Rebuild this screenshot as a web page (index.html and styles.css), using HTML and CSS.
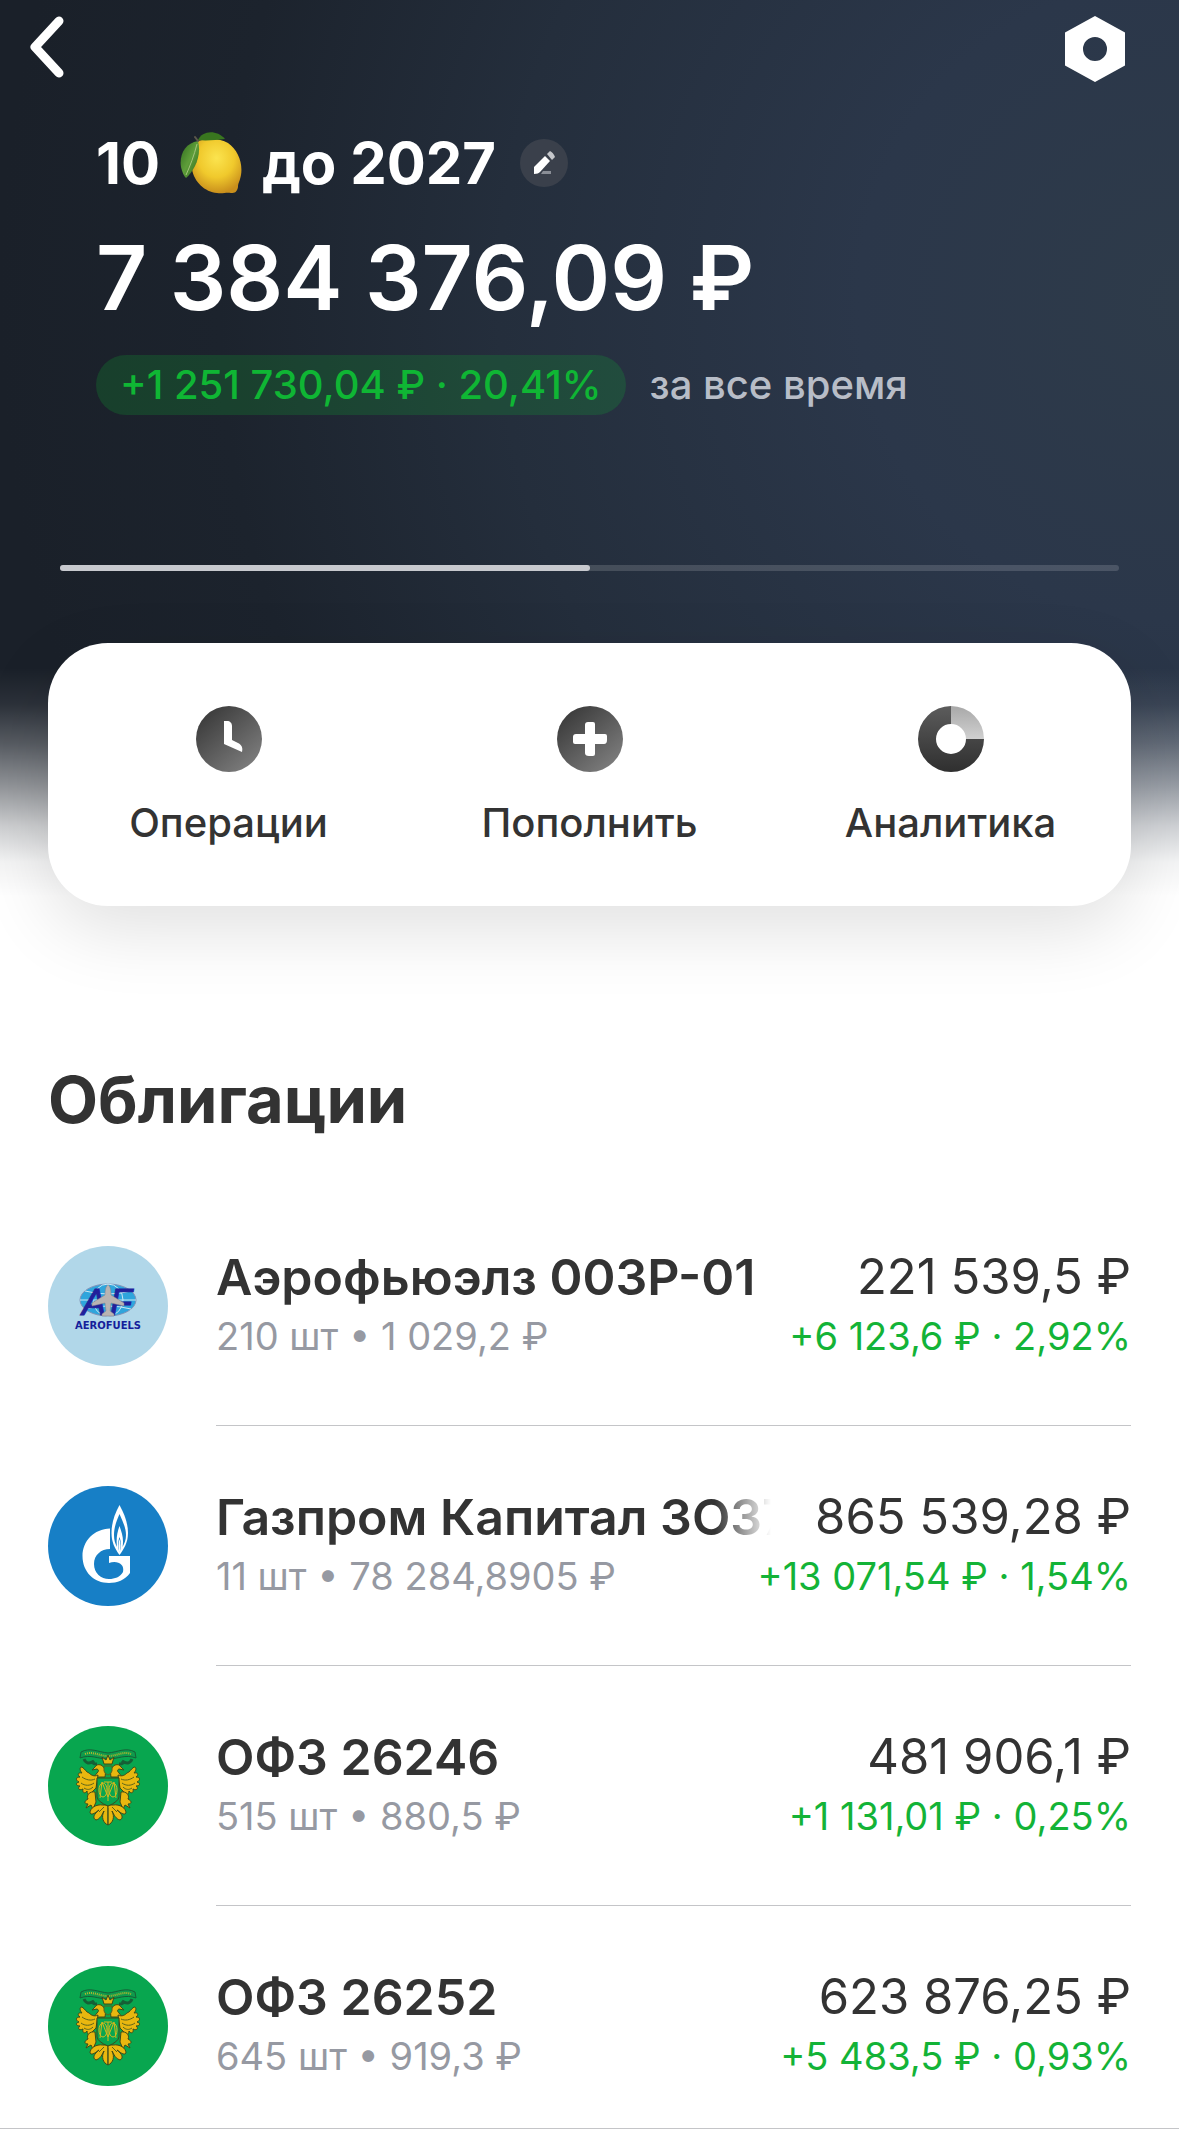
FILE: index.html
```html
<!DOCTYPE html>
<html lang="ru">
<head>
  <meta charset="UTF-8" />
  <title>Портфель</title>
  <meta name="viewport" content="width=device-width, initial-scale=1.0" />
  <link rel="stylesheet" href="styles.css">
</head>
<body>
  <header class="hero">
    <nav class="topbar">
      <button class="icon-btn" aria-label="Назад">
        <svg width="36" height="62" viewBox="0 0 36 62"><path d="M30 5 L6 31 L30 57" fill="none" stroke="#fff" stroke-width="9" stroke-linecap="round" stroke-linejoin="round"/></svg>
      </button>
      <button class="icon-btn" aria-label="Настройки">
        <svg width="60" height="66" viewBox="0 0 60 66"><path fill="#fff" fill-rule="evenodd" d="M30 0 L60 16.500 V49.500 L30 66 L0 49.500 V16.500 Z M30 21 a12 12 0 1 0 0 24 a12 12 0 1 0 0 -24 Z"/></svg>
      </button>
    </nav>

    <div class="summary">
      <div class="name-row">
        <h1 class="portfolio-name">
          <span>10</span>
          <svg class="lemon" viewBox="0 0 62 62" role="img" aria-label="лимон">
            <defs>
              <radialGradient id="lemonSkin" cx="0.5" cy="0.35" r="0.65">
                <stop offset="0" stop-color="#fbe44f"/>
                <stop offset="0.55" stop-color="#f0c92c"/>
                <stop offset="1" stop-color="#c98f1c"/>
              </radialGradient>
              <linearGradient id="leaf" x1="0" y1="0" x2="1" y2="1">
                <stop offset="0" stop-color="#2f6a1e"/>
                <stop offset="0.5" stop-color="#5f9e3a"/>
                <stop offset="1" stop-color="#2c661b"/>
              </linearGradient>
            </defs>
            <path fill="url(#lemonSkin)" d="M18 9 C27 6 40 6 48 11 C58 18 63 31 61 43 C60 49 58 51 58 55 C57 60 55 61 51 61 C46 60 43 62 37 61 C25 60 14 50 12 37 C11 26 12 14 18 9 Z"/>
            <path fill="url(#leaf)" d="M18 9 C5 11 -1 23 1 35 C2 40 4 44 6 46 C14 39 22 24 18 9 Z"/>
            <path fill="#39761f" d="M18 8 C22 -1 36 -3 45 7 C36 8 26 9 18 8 Z"/>
            <path fill="none" stroke="#a5c57d" stroke-width="1" d="M17 12 C14 24 10 34 6 43"/>
            <path fill="none" stroke="#5c574b" stroke-width="2" stroke-linecap="round" d="M18 9 L15 5"/>
          </svg>
          <span>до 2027</span>
        </h1>
        <button class="edit-btn" aria-label="Переименовать">
          <svg width="24" height="24" viewBox="0 0 24 24">
            <path fill="#fff" d="M2 23 V16 L13 5 L18 10 L8 21 C7 22 5 23 2 23 Z"/>
            <path fill="#c5c7cb" d="M15 3 L18 0 C20 1 22 3 23 6 L20 9 Z"/>
            <path fill="#8a8e96" d="M9 23 L11 20 H19 V23 Z"/>
          </svg>
        </button>
      </div>
      <div class="total">7 384 376,09 ₽</div>
      <div class="profit-row">
        <span class="profit">+1 251 730,04 ₽ · 20,41%</span>
        <span class="period">за все время</span>
      </div>
    </div>

    <div class="pager"><div class="pager-active"></div></div>

    <div class="actions">
      <button class="action">
        <svg width="66" height="66" viewBox="0 0 66 66">
          <defs>
            <linearGradient id="dark" x1="0.15" y1="0.1" x2="0.85" y2="0.9">
              <stop offset="0" stop-color="#3c3c3c"/>
              <stop offset="1" stop-color="#7c7c7c"/>
            </linearGradient>
          </defs>
          <circle cx="33" cy="33" r="33" fill="url(#dark)"/>
          <path fill="#fff" d="M28 15 H31 C34 15 36 17 36 20 V34 L42 37 C46 39 47 42 46 46 L28 38 Z"/>
        </svg>
        <span>Операции</span>
      </button>
      <button class="action">
        <svg width="66" height="66" viewBox="0 0 66 66">
          <circle cx="33" cy="33" r="33" fill="url(#dark)"/>
          <path fill="#fff" d="M31 16 H36 Q38 16 38 18 V28 H48 Q50 28 50 30 V34 Q50 38 47 38 H38 V48 Q38 50 36 50 H32 Q28 50 28 47 V38 H18 Q16 38 16 36 V31 Q16 28 19 28 H28 V19 Q28 16 31 16 Z"/>
        </svg>
        <span>Пополнить</span>
      </button>
      <button class="action">
        <svg width="66" height="66" viewBox="0 0 66 66">
          <defs>
            <linearGradient id="ring" x1="0" y1="0" x2="0" y2="1">
              <stop offset="0" stop-color="#5c5c5c"/>
              <stop offset="1" stop-color="#2f2f2f"/>
            </linearGradient>
            <linearGradient id="slice" x1="0" y1="0" x2="0" y2="1">
              <stop offset="0" stop-color="#a8a8a8"/>
              <stop offset="1" stop-color="#d0d0d0"/>
            </linearGradient>
          </defs>
          <path fill="url(#ring)" d="M33 0 A33 33 0 1 0 66 33 H48 A15 15 0 1 1 33 18 Z"/>
          <path fill="url(#slice)" d="M33 0 A33 33 0 0 1 66 33 H48 A15 15 0 0 0 33 18 Z"/>
        </svg>
        <span>Аналитика</span>
      </button>
    </div>
  </header>

  <main class="bonds">
    <h2>Облигации</h2>
    <ul class="list">
      <li class="row">
        <svg class="logo" viewBox="0 0 120 120">
          <circle cx="60" cy="60" r="60" fill="#b1d7e9"/>
          <ellipse cx="60" cy="54" rx="28" ry="16" fill="#2fa5dc" stroke="#8293b8" stroke-width="1"/>
          <g fill="none" stroke="#c9e8f5" stroke-width="1">
            <ellipse cx="60" cy="54" rx="15" ry="16"/>
            <path d="M32 54 H88 M60 38 V70 M37 45 Q60 51 83 45 M37 63 Q60 57 83 63"/>
          </g>
          <text class="af-mark" x="34" y="69">A</text>
          <text class="af-mark" x="62" y="69">F</text>
          <path fill="#b9b4b2" stroke="#837f8a" stroke-width="0.500" d="M60 39 C62 40 63 43 63 49 L76 57 V60 L63 57 L62 65 L66 68 V70 H54 V68 L58 65 L57 57 L44 60 V57 L57 49 C57 43 58 40 60 39 Z"/>
          <text class="af-name" x="60" y="83">AEROFUELS</text>
        </svg>
        <div class="info">
          <div class="line">
            <span class="title">Аэрофьюэлз 003P-01</span>
            <span class="value">221 539,5 ₽</span>
          </div>
          <div class="line small">
            <span class="count">210 шт • 1 029,2 ₽</span>
            <span class="gain">+6 123,6 ₽ · 2,92%</span>
          </div>
        </div>
      </li>
      <li class="row">
        <svg class="logo" viewBox="0 0 120 120">
          <circle cx="60" cy="60" r="60" fill="#177fc6"/>
          <path fill="#fff" d="M62 42.500 C46 43 34.500 55 34.500 70 C34.500 86 46 97 61 97 C69 97 77 94 82 87 V70 H61 V77 C69 74 77 78 75 86 C72 91 67 93 61 93 C53 93 46 87 46 78 C46 69 53 63 62 63 Z"/>
          <path fill="#fff" d="M71.500 19 C66 29 63.500 38 63.500 47 C63.500 56 67 63 71.500 69 C76 63 80 56 80 47 C80 38 77 29 71.500 19 Z"/>
          <path fill="#177fc6" d="M71.500 28 C68 36 66 42 66 49 C66 54 67 57 69 61 C68 53 69 47 71.500 40 C74 47 76 53 74.500 61 C76.500 57 78 54 78 49 C78 42 75 36 71.500 28 Z"/>
          <path fill="#177fc6" d="M71.500 51 C69.500 57 69.500 61 71.500 66 C73.500 61 73.500 57 71.500 51 Z"/>
          <path fill="#fff" d="M71.500 53 C70 58 70 62 71.500 67 C73 62 73 58 71.500 53 Z"/>
        </svg>
        <div class="info">
          <div class="line">
            <span class="title faded">Газпром Капитал ЗО37</span>
            <span class="value">865 539,28 ₽</span>
          </div>
          <div class="line small">
            <span class="count">11 шт • 78 284,8905 ₽</span>
            <span class="gain">+13 071,54 ₽ · 1,54%</span>
          </div>
        </div>
      </li>
      <li class="row">
        <svg class="logo" viewBox="0 0 120 120">
          <defs>
            <g id="crestHalf">
              <!-- neck and head -->
              <path d="M57 51 C58 46 57 41 53 39 C50 38 48 39 47 41 L44 44 L49 43 C51 44 51 45 49 47 L46 51 Z"/>
              <!-- wing -->
              <path d="M50 49 C46 51 43 49 41 47 C38 46 37 43 34 41 C31 41 32 45 34 47 C30 46 29 49 32 51 C28 51 27 54 31 56 C27 57 28 60 32 60 C29 62 31 65 35 63 C34 67 37 68 39 65 C39 69 43 70 44 66 L48 62 Z"/>
              <!-- leg -->
              <path d="M47 66 C42 65 38 69 40 73 C36 75 36 78 40 78 L38 82 L43 79 L45 83 L48 76 Z"/>
              <!-- tail -->
              <path d="M55 79 C48 78 42 82 42 87 C44 90 48 86 51 84 C46 88 44 92 48 94 C52 93 54 89 56 85 C53 91 55 97 60 99 V79 Z"/>
            </g>
            <g id="crest">
              <circle cx="60" cy="60" r="60" fill="#08a64f"/>
              <path fill="none" stroke="#165f36" stroke-width="3" d="M36 33 Q39 40 46 35 Q43 38 49 38 M84 33 Q81 40 74 35 Q77 38 71 38"/>
              <path fill="#0f9a4c" stroke="#165f36" stroke-width="1" d="M33 26 C42 21 50 26 60 27 C70 26 78 21 87 26 L88 32 C77 28 70 33 60 33 C50 33 43 28 32 32 Z"/>
              <path fill="none" stroke="#b6b92c" stroke-width="2" stroke-dasharray="1 1" d="M37 28 C45 25 51 30 60 30 C69 30 75 25 83 28"/>
              <g fill="#e9b70f" stroke="#3f4a18" stroke-width="1">
                <use href="#crestHalf"/>
                <use href="#crestHalf" transform="translate(120 0) scale(-1 1)"/>
                <path d="M56 38 L54 31 L58 34 L60 29 L62 34 L66 31 L64 38 Z"/>
              </g>
              <path fill="#08a64f" stroke="#5d641c" stroke-width="1" d="M56 40 H64 V45 Q63 48 60 49 Q57 48 56 45 Z"/>
              <path fill="none" stroke="#5c641c" stroke-width="1" d="M47 53 C43 55 38 54 34 51 M46 57 C42 60 37 60 33 57 M45 61 C42 64 39 64 36 62 M73 53 C77 55 82 54 86 51 M74 57 C78 60 83 60 87 57 M75 61 C78 64 81 64 84 62 M60 82 V98 M51 86 L56 81 M69 86 L64 81"/>
              <path fill="#08a64f" stroke="#3f4a18" stroke-width="1" d="M49 52 H71 V71 Q70 76 60 80 Q50 76 49 71 Z"/>
              <g fill="none" stroke="#d6b81c" stroke-width="1">
                <ellipse cx="55" cy="64" rx="4" ry="7"/>
                <ellipse cx="65" cy="64" rx="4" ry="7"/>
                <path d="M60 56 V75 M56 56 H64 M52 72 L54 56 L60 71 L66 56 L68 72"/>
              </g>
            </g>
          </defs>
          <use href="#crest"/>
        </svg>
        <div class="info">
          <div class="line">
            <span class="title">ОФЗ 26246</span>
            <span class="value">481 906,1 ₽</span>
          </div>
          <div class="line small">
            <span class="count">515 шт • 880,5 ₽</span>
            <span class="gain">+1 131,01 ₽ · 0,25%</span>
          </div>
        </div>
      </li>
      <li class="row">
        <svg class="logo" viewBox="0 0 120 120"><use href="#crest"/></svg>
        <div class="info">
          <div class="line">
            <span class="title">ОФЗ 26252</span>
            <span class="value">623 876,25 ₽</span>
          </div>
          <div class="line small">
            <span class="count">645 шт • 919,3 ₽</span>
            <span class="gain">+5 483,5 ₽ · 0,93%</span>
          </div>
        </div>
      </li>
    </ul>
  </main>
  <footer class="bottom-bar"></footer>
</body>
</html>
```

FILE: styles.css
```css
* {
  box-sizing: border-box;
}

body {
  margin: 0;
  background-color: #fff;
  color: #333;
  font-family: Inter, "Liberation Sans", sans-serif;
}

button {
  border: none;
  padding: 0;
  background: none;
  color: inherit;
  font-family: inherit;
  cursor: pointer;
}

svg {
  display: block;
  flex: none;
}

/* Header */
.hero {
  padding: 16px 48px 94px;
  background:
    linear-gradient(rgba(255, 255, 255, 0) 668px, rgba(255, 255, 255, 0.08) 704px, rgba(255, 255, 255, 0.27) 744px, rgba(255, 255, 255, 0.52) 786px, rgba(255, 255, 255, 0.78) 826px, rgba(255, 255, 255, 0.95) 862px, #fff 896px),
    radial-gradient(circle at 100% 300px, #2e3b4a 0, #2b374a 320px, #242e3c 680px, #1c232d 960px, #1a2029 1180px);
}

.topbar {
  display: flex;
  align-items: flex-start;
  justify-content: space-between;
  margin: 0 6px 0 -19px;
}

.summary {
  padding: 41px 48px 0;
  color: #fff;
}

.name-row,
.portfolio-name,
.profit-row {
  display: flex;
  align-items: center;
}

.name-row {
  gap: 24px;
}

.portfolio-name {
  gap: 20px;
  margin: 0;
  font-size: 58px;
  line-height: 80px;
  font-weight: 700;
}

.lemon {
  width: 62px;
  height: 62px;
}

.edit-btn {
  display: flex;
  align-items: center;
  justify-content: center;
  width: 48px;
  height: 48px;
  border-radius: 50%;
  background-color: #3a404b;
}

.total {
  margin-top: 20px;
  font-size: 89px;
  line-height: 110px;
  font-weight: 600;
  white-space: nowrap;
}

.profit-row {
  gap: 24px;
  margin-top: 22px;
  font-size: 40px;
  line-height: 60px;
  font-weight: 500;
  white-space: nowrap;
}

.profit {
  padding: 0 24px;
  border-radius: 30px;
  background-color: rgba(16, 185, 52, 0.2);
  color: #0fb634;
}

.period {
  color: #b8bdc7;
}

.pager {
  height: 6px;
  margin: 150px 12px 0;
  border-radius: 3px;
  background-color: rgba(255, 255, 255, 0.15);
}

.pager-active {
  width: 50%;
  height: 6px;
  border-radius: 3px;
  background-color: #c7c9ce;
}

.actions {
  display: grid;
  grid-template-columns: repeat(3, 1fr);
  margin-top: 72px;
  padding: 63px 0 58px;
  border-radius: 60px;
  background-color: #fff;
  box-shadow: 0 24px 72px rgba(0, 0, 0, 0.12);
}

.action {
  display: flex;
  flex-direction: column;
  align-items: center;
  gap: 26px;
  font-size: 40px;
  line-height: 50px;
  font-weight: 500;
}

/* Bonds */
.bonds {
  padding: 0 48px;
}

h2 {
  margin: 0;
  padding: 60px 0 46px;
  font-size: 65px;
  line-height: 80px;
  font-weight: 700;
}

.list {
  margin: 0;
  padding: 0;
  list-style: none;
}

.row {
  display: flex;
  gap: 48px;
}

.logo {
  width: 120px;
  height: 120px;
  margin-top: 60px;
}

.af-mark {
  fill: #21209a;
  stroke: #21209a;
  stroke-width: 1px;
  font: italic 400 36px "Liberation Sans", sans-serif;
}

.af-name {
  fill: #15209a;
  font: 700 10px "DejaVu Sans", sans-serif;
  text-anchor: middle;
}

.info {
  flex: 1;
  min-width: 0;
  padding: 61px 0 60px;
  border-bottom: 1px solid #c4c5c8;
}

.row:last-child .info {
  padding-bottom: 43px;
  border-bottom: none;
}

.line {
  display: flex;
  justify-content: space-between;
  gap: 44px;
  font-size: 50px;
  line-height: 60px;
  white-space: nowrap;
}

.title {
  min-width: 0;
  overflow: hidden;
  font-weight: 600;
}

.faded {
  -webkit-mask-image: linear-gradient(to left, transparent, #000 56px);
  mask-image: linear-gradient(to left, transparent, #000 56px);
}

.value {
  font-size: 49px;
}

.small {
  font-size: 38px;
  line-height: 58px;
}

.count {
  color: #9699a2;
}

.gain {
  color: #13b337;
}

.bottom-bar {
  height: 2px;
  border-top: 1px solid #c4c5c8;
}
```
